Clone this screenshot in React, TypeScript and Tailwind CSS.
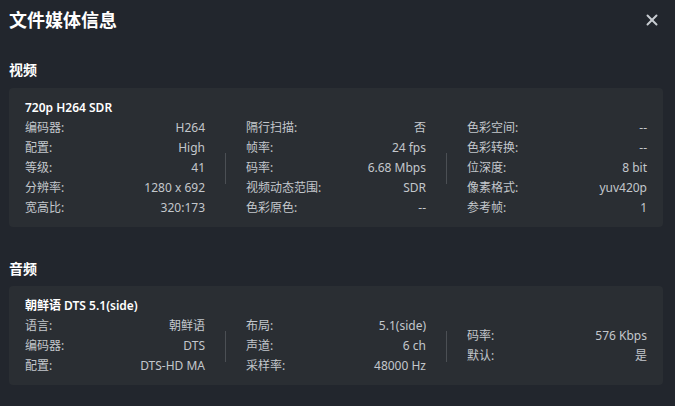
import { Fragment } from "react";
import { X } from "lucide-react";

type Row = [string, string];

const FONT = {
  fontFamily: '"Noto Sans", "Noto Sans CJK SC", sans-serif',
};

const videoCols: Row[][] = [
  [
    ["编码器:", "H264"],
    ["配置:", "High"],
    ["等级:", "41"],
    ["分辨率:", "1280 x 692"],
    ["宽高比:", "320:173"],
  ],
  [
    ["隔行扫描:", "否"],
    ["帧率:", "24 fps"],
    ["码率:", "6.68 Mbps"],
    ["视频动态范围:", "SDR"],
    ["色彩原色:", "--"],
  ],
  [
    ["色彩空间:", "--"],
    ["色彩转换:", "--"],
    ["位深度:", "8 bit"],
    ["像素格式:", "yuv420p"],
    ["参考帧:", "1"],
  ],
];

const audioCols: Row[][] = [
  [
    ["语言:", "朝鲜语"],
    ["编码器:", "DTS"],
    ["配置:", "DTS-HD MA"],
  ],
  [
    ["布局:", "5.1(side)"],
    ["声道:", "6 ch"],
    ["采样率:", "48000 Hz"],
  ],
  [
    ["码率:", "576 Kbps"],
    ["默认:", "是"],
  ],
];

function Column({ rows }: { rows: Row[] }) {
  return (
    <div className="flex min-w-0 flex-1 basis-0 flex-col justify-center">
      {rows.map(([label, value]) => (
        <div
          key={label}
          className="flex h-5 items-center justify-between text-[12px] text-[#c3c7cc]"
        >
          <span>{label}</span>
          <span>{value}</span>
        </div>
      ))}
    </div>
  );
}

function InfoCard({ title, cols }: { title: string; cols: Row[][] }) {
  return (
    <div className="ml-[9px] mr-[12px] rounded bg-[#2a2e33] px-4 pb-[9px] pt-[10px]">
      <div className="flex h-5 items-center text-[12px] font-semibold text-white">
        {title}
      </div>
      <div className="flex">
        {cols.map((rows, i) => (
          <Fragment key={i}>
            {i > 0 && (
              <div className="flex items-center px-5">
                <div className="h-[31px] w-px bg-[#4b4f54]" />
              </div>
            )}
            <Column rows={rows} />
          </Fragment>
        ))}
      </div>
    </div>
  );
}

export default function App() {
  return (
    <div
      className="h-[406px] w-[675px] overflow-hidden bg-[#22262d]"
      style={FONT}
    >
      <div className="flex h-10 items-center justify-between pl-[9px] pr-[14px]">
        <h1 className="text-[18px] font-bold text-white">文件媒体信息</h1>
        <X className="h-[18px] w-[18px] text-[#c8ccd1]" strokeWidth={2.6} />
      </div>

      <h2 className="mt-[19px] flex h-5 items-center px-[9px] text-[14px] font-bold text-white">
        视频
      </h2>
      <div className="mt-[9px]">
        <InfoCard title="720p H264 SDR" cols={videoCols} />
      </div>

      <h2 className="mt-[31px] flex h-5 items-center px-[9px] text-[14px] font-bold text-white">
        音频
      </h2>
      <div className="mt-[8px]">
        <InfoCard title="朝鲜语 DTS 5.1(side)" cols={audioCols} />
      </div>
    </div>
  );
}
